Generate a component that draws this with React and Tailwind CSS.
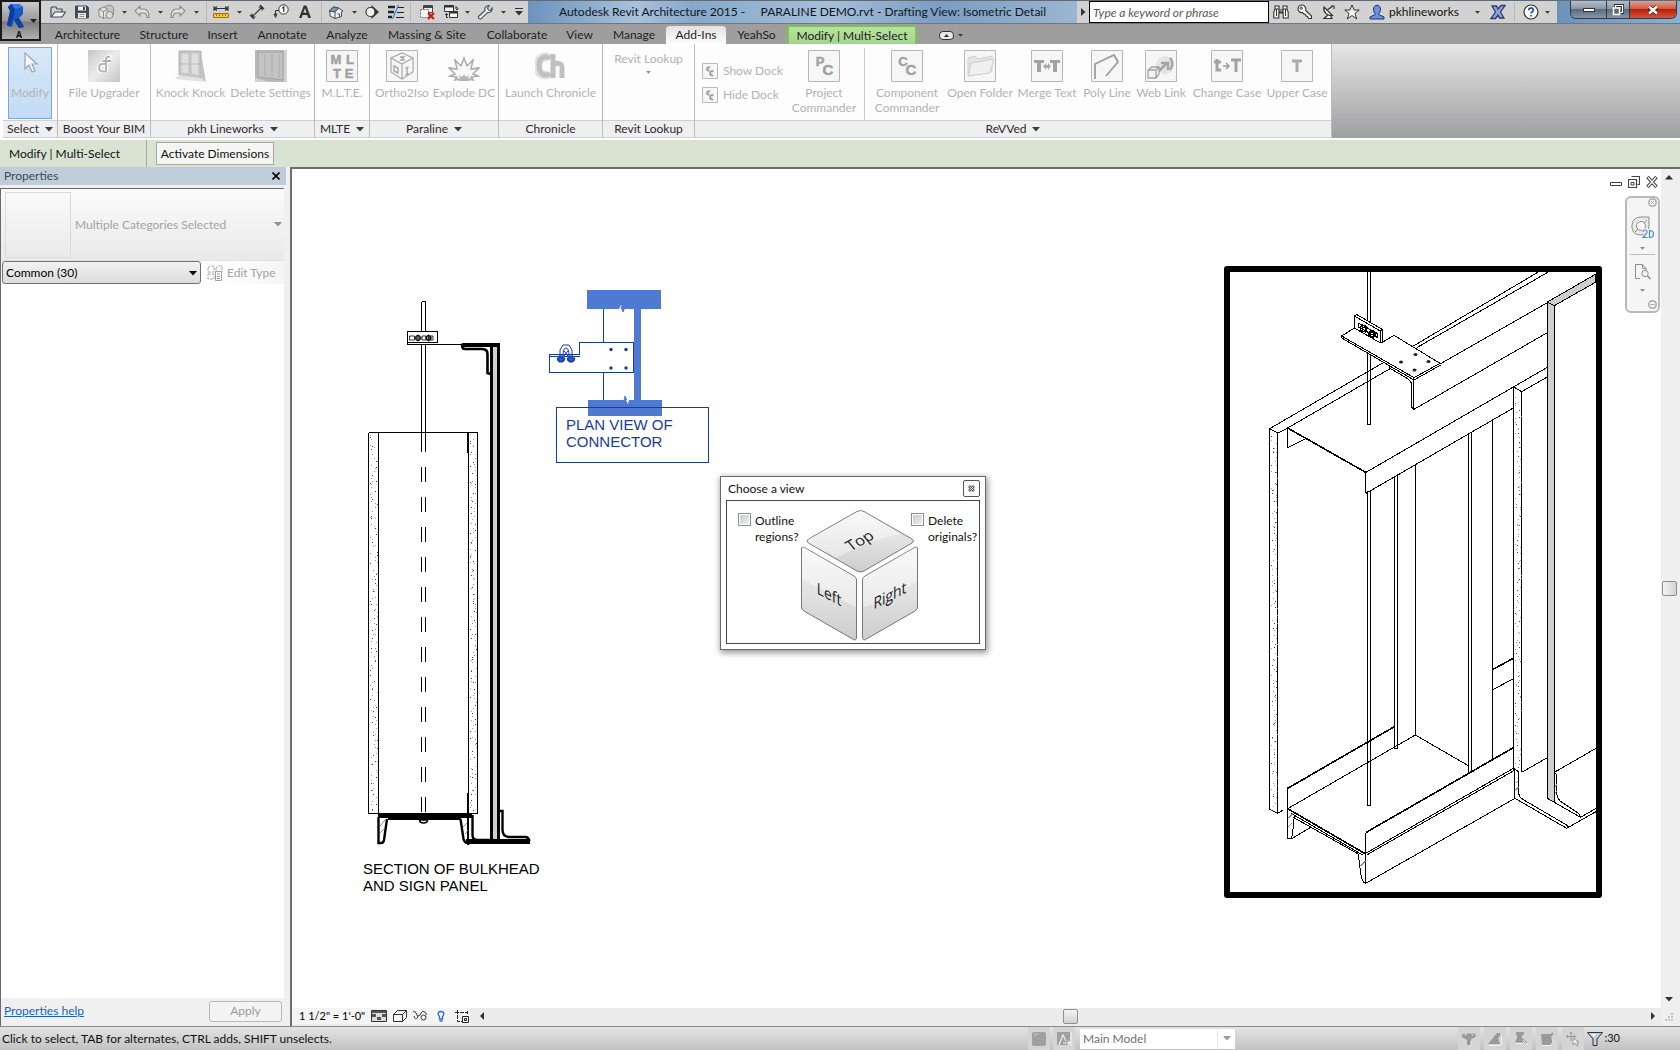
import React from "react";

const UI_FONT = "font-['Lato','Open_Sans',sans-serif]";

/* ---------- small helpers ---------- */

function Svg({ w = 16, h = 16, vb, className = "", children, ...rest }) {
  return (
    <svg width={w} height={h} viewBox={vb || `0 0 ${w} ${h}`} fill="none" aria-hidden="true" className={"block shrink-0 " + className} {...rest}>
      {children}
    </svg>
  );
}

function Caret({ className = "", fill = "#3c3c3c", w = 8 }) {
  return (
    <Svg w={w} h={5} vb="0 0 8 5" className={className}>
      <path d="M0 0h8L4 4.6z" fill={fill} />
    </Svg>
  );
}

function IconButton({ label, className = "", children }) {
  return (
    <button type="button" aria-label={label} className={"flex shrink-0 items-center justify-center " + className}>
      {children}
    </button>
  );
}

function Divider({ className = "" }) {
  return <span className={"h-5 w-px shrink-0 bg-[#b9b9b9] " + className} />;
}

/* ---------- quick access icons ---------- */

const ink = "#444b57";

const OpenIcon = () => (
  <Svg>
    <path d="M1 13V4l1-1h4l1 2h5v3" stroke={ink} strokeWidth="1.2" />
    <path d="M1.2 13 5 8h10.5L12 13z" fill="#f4f4f4" stroke={ink} strokeWidth="1.2" />
  </Svg>
);
const SaveIcon = () => (
  <Svg>
    <path d="M1.5 2h11.500l1.500 1.500V14h-13z" fill={ink} stroke={ink} />
    <path d="M4 2.500h8v4H4z" fill="#f1f1f1" />
    <path d="M4 9h8v5H4z" fill="#f1f1f1" />
    <path d="M5.500 10.500h5M5.500 12.500h5" stroke="#8f8f8f" />
    <path d="M9 3h2v3H9z" fill={ink} />
  </Svg>
);
const SyncIcon = () => (
  <Svg>
    <path d="M7 2.500 12 1l3.500 2.500v7L12 13l-5-2z" fill="#c7c7c7" stroke="#8a8a8a" />
    <path d="M1 5l5-2 4 2.500v7L5.500 14.500 1 12z" fill="#e3e3e3" stroke="#8a8a8a" />
    <path d="M1 5l4.500 2.500L10 5.500M5.500 7.500v7" stroke="#8a8a8a" />
    <circle cx="11.500" cy="11" r="3.500" fill="#dcdcdc" stroke="#8a8a8a" />
  </Svg>
);
const UndoIcon = ({ flip }) => (
  <Svg>
    <path
      transform={flip ? "translate(16 0) scale(-1 1)" : undefined}
      d="M1 7l5-5v3h3.500C13 5 15 7.500 15 13.500h-2C12.800 10.500 12 9 9.500 9H6v3z"
      fill="#e2e2e2"
      stroke="#8a8a8a"
      strokeWidth="1.100"
    />
  </Svg>
);
const MeasureIcon = () => (
  <Svg>
    <path d="M1 4.500h14M1 2v5M15 2v5M4 2.500 1.500 4.500 4 6.500M12 2.500l2.500 2-2.500 2" stroke="#333" strokeWidth="1.100" />
    <path d="M.5 9.500h15v4H.5z" fill="#ffc52e" stroke="#a8700a" />
    <path d="M3.500 10v2M6.500 10v2M9.500 10v2M12.500 10v2" stroke="#a8700a" />
  </Svg>
);
const DimIcon = () => (
  <Svg>
    <path d="M3 13 13 3M9.500 3H13v3.500M3 9.500V13h3.500M11 1l4 4M1 11l4 4" stroke="#333" strokeWidth="1.200" />
  </Svg>
);
const TagIcon = () => (
  <Svg>
    <circle cx="10.500" cy="5.500" r="4.700" fill="#f7f7f7" stroke="#333" />
    <path d="M9.200 4.200 10.800 3v5" stroke="#333" strokeWidth="1.200" />
    <path d="M6 6.500H2.500v5M1 10l1.500 3.500L4 10z" stroke="#333" />
  </Svg>
);
const TextIcon = () => (
  <Svg>
    <path d="M2 14 6.800 1.500h2.600L14 14h-2.800l-1-3H5.600l-1 3z M6.300 8.800h3.300L8 4.200z" fill="#333" fillRule="evenodd" />
  </Svg>
);
const HouseIcon = () => (
  <Svg>
    <path d="M1 7l4.500-4 5 1 4.500 3-1.500.8v4.700L7 14.500 2 12V7.500z" fill="#eef1f5" stroke={ink} />
    <path d="M1 7 5.500 3l5 1-3.500 4z" fill="#8593a6" stroke={ink} />
    <path d="M7 8v6.500M9.500 10h2v3" stroke={ink} />
  </Svg>
);
const SectionIcon = () => (
  <Svg>
    <path d="M7.500 1 15 8l-7.500 7z" fill="#333" />
    <circle cx="6.500" cy="8" r="4.500" fill="#f2f2f2" stroke="#333" strokeWidth="1.200" />
  </Svg>
);
const ThinIcon = () => (
  <Svg>
    <path d="M0 3h7M0 8h6M0 13h4" stroke="#222" strokeWidth="2.600" />
    <path d="M9 3.500h7M9 8.500h7M8 13.500h8" stroke="#222" />
    <path d="M10.500 1 4.500 15" stroke="#4a8ad0" strokeWidth="1.400" />
  </Svg>
);
const CloseHiddenIcon = () => (
  <Svg>
    <path d="M4.500 1.500h9v7h-9z" fill="#eee" stroke="#444" />
    <path d="M4.500 3h9" stroke="#444" strokeWidth="2" />
    <path d="M1.500 5.500h8v8h-8z" fill="#f5f5f5" stroke="#777" strokeDasharray="2 1" />
    <path d="m9 9 6 6M15 9l-6 6" stroke="#d01010" strokeWidth="2" />
  </Svg>
);
const SwitchIcon = () => (
  <Svg>
    <path d="M1.500 1.500h9v6h-9z" fill="#f5f5f5" stroke="#333" />
    <path d="M1.500 2.500h9" stroke="#333" strokeWidth="2" />
    <path d="M6.500 7.500h8v6h-8z" fill="#f5f5f5" stroke="#333" />
    <path d="M6.500 8.500h8" stroke="#333" strokeWidth="2" />
    <path d="M12 3h2v3M3.500 9.500v4H5M12.500 4.500 14 6l1.500-1.500M2 11l1.500-1.500L5 11" stroke="#333" />
  </Svg>
);
const WrenchIcon = () => (
  <Svg>
    <path d="M1.500 12.500 8 6.500C7.200 4 9 1.500 12 1.500L10.500 4l1 2 2.300.2L15 4c.7 2.500-1.500 5-4.500 4.500L4 14.800c-1.500.7-3.200-1-2.500-2.300z" fill="#f1f1f1" stroke={ink} strokeWidth="1.100" />
  </Svg>
);

/* [icon, label, spacing] ; "caret" and "bar" are separators between tools */
const quickTools = [
  [OpenIcon, "Open", "ml-[9px]"],
  [SaveIcon, "Save", "ml-2"],
  [SyncIcon, "Synchronize", "ml-2"],
  ["caret", "Synchronize options", "ml-1.5"],
  [UndoIcon, "Undo", "ml-1.5"],
  ["caret", "Undo list", "ml-1.5"],
  [() => <UndoIcon flip />, "Redo", "ml-1.5"],
  ["caret", "Redo list", "ml-1.5"],
  ["bar", "", "ml-1.5"],
  [MeasureIcon, "Measure", "ml-1.5"],
  ["caret", "Measure options", "ml-1.5"],
  [DimIcon, "Aligned Dimension", "ml-1.5"],
  [TagIcon, "Tag by Category", "ml-2"],
  [TextIcon, "Text", "ml-2"],
  ["bar", "", "ml-2"],
  [HouseIcon, "Default 3D View", "ml-1.5"],
  ["caret", "3D View options", "ml-1.5"],
  [SectionIcon, "Section", "ml-1.5"],
  [ThinIcon, "Thin Lines", "ml-2"],
  ["bar", "", "ml-1.5"],
  [CloseHiddenIcon, "Close Hidden Windows", "ml-2"],
  [SwitchIcon, "Switch Windows", "ml-2"],
  ["caret", "Switch Windows list", "ml-1"],
  [WrenchIcon, "Manage Tools", "ml-1.5"],
  ["caret", "Manage Tools options", "ml-1.5"],
];

function QuickAccess() {
  return (
    <div className="flex w-[487px] shrink-0 items-center bg-[#d2d2d2]">
      {quickTools.map(([Icon, label, gap], i) => {
        if (Icon === "bar") return <Divider key={i} className={gap} />;
        if (Icon === "caret")
          return (
            <IconButton key={i} label={label} className={"w-2 h-4 " + gap}>
              <Caret w={5} />
            </IconButton>
          );
        return (
          <IconButton key={i} label={label} className={gap}>
            <Icon />
          </IconButton>
        );
      })}
      <IconButton label="Customize Quick Access Toolbar" className="ml-2">
        <Svg w={8} h={8}>
          <path d="M0 .5h8" stroke="#333" />
          <path d="M0 3h8L4 7.500z" fill="#333" />
        </Svg>
      </IconButton>
    </div>
  );
}

/* ---------- title bar ---------- */

function TitleBar() {
  return (
    <header className="flex h-6 border-t border-[#5f6a74] border-b border-b-[#6f7880] bg-[#7f9fbf] pl-[41px]">
      <QuickAccess />
      <h1 className="flex min-w-0 flex-1 items-center justify-center overflow-hidden bg-[linear-gradient(90deg,#6c93bd,#a9c2da_20%,#86a8cb_30%,#a5bfd8_55%,#7a9dc2_75%,#9bb6d0)] text-[12px] whitespace-pre text-[#10151c]">
        {"Autodesk Revit Architecture 2015 -     PARALINE DEMO.rvt - Drafting View: Isometric Detail"}
      </h1>
      <div className="flex w-[480px] shrink-0 items-center bg-[#d2d2d2]">
        <IconButton label="Collapse search" className="w-3">
          <Svg w={5} h={8}>
            <path d="M0 0v8l4.500-4z" fill="#333" />
          </Svg>
        </IconButton>
        <input
          aria-label="Search help"
          placeholder="Type a keyword or phrase"
          className="h-[22px] w-[180px] border border-black bg-white px-[3px] text-[12px] italic placeholder:text-[#555]"
        />
        <IconButton label="Search" className="ml-1">
          <Svg>
            <path d="M2 5V2h4v3M10 5V2h4v3M2 5 .8 8v6h5V9h4.400v5h5V8L14 5h-4v3H6V5z" fill="#f6f6f6" stroke="#333" strokeWidth="1.100" />
            <path d="M3.500 5v7M12.500 5v7M6 6h4" stroke="#333" />
          </Svg>
        </IconButton>
        <IconButton label="Subscription Center" className="ml-2">
          <Svg>
            <path d="M5 1C2.500 1 1 2.800 1 5s2 4 4.500 3.500L7 10l1.500.5.500 1.500 1.500.500L11.500 14.500h3V12L8.700 6.500C9.200 3.500 7.500 1 5 1z" fill="#f6f6f6" stroke="#333" strokeWidth="1.100" />
            <circle cx="4.200" cy="4.200" r="1.100" stroke="#333" />
          </Svg>
        </IconButton>
        <IconButton label="Communication Center" className="ml-2">
          <Svg>
            <path d="M3 3c-1 5 3 9 8.500 8.500zM6 6l6-4M10 2h3v3M7 11l-4 3.500h8L9.500 12" fill="#f6f6f6" stroke="#333" strokeWidth="1.200" />
          </Svg>
        </IconButton>
        <IconButton label="Favorites" className="ml-[7px]">
          <Svg>
            <path d="m8 1 2 5h5.300L11 9.300 12.600 15 8 11.500 3.400 15 5 9.300.7 6H6z" fill="#f6f6f6" stroke="#333" />
          </Svg>
        </IconButton>
        <button type="button" className="ml-[9px] flex w-[92px] items-center gap-1 text-[12px] text-[#111]">
          <Svg>
            <path d="M4.500 5c0-5 7-5 7 0 0 2.500-.8 3.700-1.700 4.700v1l5.200 2.200V15H1v-2.100l5.200-2.200v-1C5.300 8.700 4.500 7.500 4.500 5z" fill="#6d8fe0" stroke="#1c3478" />
          </Svg>
          pkhlineworks
        </button>
        <Caret w={5} className="ml-3.5" />
        <IconButton label="Exchange Apps" className="ml-2.5">
          <Svg>
            <path d="M2 2h4.500L8 5l3-3.500h4L10.500 8l3.500 6H9.500L8 11l-2.500 3.500H1L5.500 8z" fill="#8ea3d8" stroke="#2d3c72" strokeWidth="1.300" />
          </Svg>
        </IconButton>
        <Divider className="ml-2" />
        <IconButton label="Help" className="ml-2">
          <Svg>
            <circle cx="8" cy="8" r="7" fill="#fbfbfb" stroke="#333" strokeWidth="1.200" />
            <path d="M5.700 6.300c0-3 4.600-3 4.600-.2 0 1.700-2.200 1.700-2.200 3.400M8 11v1.600" stroke="#2454b8" strokeWidth="1.800" />
          </Svg>
        </IconButton>
        <Caret w={5} className="ml-1.5" />
      </div>
      <div className="flex w-[123px] shrink-0 items-start justify-end bg-[linear-gradient(90deg,#6d93b8,#8fb0cf)] pr-[3px]">
        <div className="flex h-[18px] overflow-hidden rounded-b-md border border-t-0 border-[#2c3a48]">
          <IconButton label="Minimize" className="w-[35px] bg-[linear-gradient(#b3bec9,#8998a8_45%,#5a6b7c_50%,#8796a5)]">
            <span className="h-1 w-3 border border-[#333] bg-white" />
          </IconButton>
          <IconButton label="Restore" className="w-6 border-x border-[#2c3a48] bg-[linear-gradient(#b3bec9,#8998a8_45%,#5a6b7c_50%,#8796a5)]">
            <Svg w={12} h={12}>
              <path d="M3.500 1.500h7v7h-7z" stroke="#333" strokeWidth="3" />
              <path d="M3.500 1.500h7v7h-7z" stroke="#fff" strokeWidth="1.200" />
              <path d="M1.500 4h6v6.500h-6z" fill="#667" stroke="#fff" strokeWidth="1.500" />
            </Svg>
          </IconButton>
          <IconButton label="Close" className="w-[46px] bg-[linear-gradient(#e0a090,#cf5a44_45%,#b81f0c_50%,#d8553a)]">
            <Svg w={12} h={10}>
              <path d="m2 1.500 8 7M10 1.500l-8 7" stroke="#4a1a14" strokeWidth="4" />
              <path d="m2 1.500 8 7M10 1.500l-8 7" stroke="#fff" strokeWidth="2.400" />
            </Svg>
          </IconButton>
        </div>
      </div>
    </header>
  );
}

function AppButton() {
  return (
    <button
      type="button"
      aria-label="Application menu"
      className="absolute top-0 left-0 z-10 flex h-[41px] w-[41px] items-start border-2 border-[#1a1a1a] bg-[linear-gradient(#c9c9c9,#9a9a9a_50%,#7c7c7c_55%,#b0b0b0)]"
    >
      <Svg w={37} h={37}>
        <path d="M9 2h8l4 3v7l-4 4 5 9-5 1-5-8-2 7-5-2 3-14-2-4z" fill="#1a56c4" />
        <path d="M9 2h8l4 3-8 2z" fill="#2f78e6" />
        <path d="M9 2l4 5-2 10-3 8-3-2 3-14-2-4z" fill="#0d3c9c" />
        <path d="m17 16 5 9-5 1-5-8z" fill="#0f3f9f" />
        <path d="M28 17h7l-3.500 4z" fill="#222" />
        <path d="M14 36l2.400-7h1.400l2.400 7h-1.500l-.5-1.600h-2.300l-.5 1.600z M16.300 33h1.500l-.7-2.300z" fill="#111" fillRule="evenodd" />
      </Svg>
    </button>
  );
}

/* ---------- tabs ---------- */

const tabs = ["Architecture", "Structure", "Insert", "Annotate", "Analyze", "Massing & Site", "Collaborate", "View", "Manage", "Add-Ins", "YeahSo", "Modify | Multi-Select"];
const tabWidth = {
  Architecture: "w-[85px]", Structure: "w-[68px]", Insert: "w-[49px]", Annotate: "w-[70px]", Analyze: "w-[60px]",
  "Massing & Site": "w-[100px]", Collaborate: "w-20", View: "w-[45px]", Manage: "w-[64px]", "Add-Ins": "w-[60px]",
  YeahSo: "w-[61px]", "Modify | Multi-Select": "w-[130px]",
};

function Tabs() {
  return (
    <nav role="tablist" aria-label="Ribbon tabs" className="flex h-5 items-end bg-[#9e9e9e] pl-[45px] text-[12px] text-[#1e1e1e]">
      {tabs.map((t) => {
        const look =
          t === "Add-Ins"
            ? "bg-[linear-gradient(#e2e2e2,#fdfdfd)] rounded-t-sm"
            : t.startsWith("Modify")
            ? "bg-[linear-gradient(#b9dfa0,#a3d68a)] border-x-2 border-t border-[#78c850]"
            : "";
        return (
          <button key={t} type="button" role="tab" aria-selected={t === "Add-Ins"} className={"flex h-[18px] shrink-0 items-center justify-center whitespace-nowrap " + tabWidth[t] + " " + look}>
            {t}
          </button>
        );
      })}
      <IconButton label="Minimize ribbon" className="ml-[22px] h-[18px] gap-1">
        <span className="flex h-[9px] w-[15px] items-center justify-center rounded-sm border border-[#333] bg-[#e8e8e8]">
          <Svg w={5} h={3}>
            <path d="M0 3h5L2.500 0z" fill="#333" />
          </Svg>
        </span>
        <Caret w={5} />
      </IconButton>
    </nav>
  );
}

/* ---------- ribbon ---------- */

const g = "#a9a9a9";
const Boxed = ({ children }) => (
  <Svg w={32} h={32}>
    <path d="M.5.500h31v31H.5z" fill="#f6f6f6" stroke="#b5b5b5" />
    {children}
  </Svg>
);
const Glyphs = ({ items }) => (
  <Boxed>
    <g fill="#a2a2a2" stroke="#a2a2a2" strokeWidth=".5" fontFamily="'Liberation Sans',sans-serif" fontWeight="700">
      {items.map(([t, x, y, s]) => (
        <text key={t + x + y} x={x} y={y} fontSize={s} textAnchor="middle">{t}</text>
      ))}
    </g>
  </Boxed>
);

const UpgraderIcon = () => (
  <Svg w={32} h={32}>
    <defs>
      <linearGradient id="upg" x1="0" y1="0" x2="1" y2="1">
        <stop offset="0" stopColor="#c6c6c6" />
        <stop offset=".5" stopColor="#ececec" />
        <stop offset="1" stopColor="#c4c4c4" />
      </linearGradient>
    </defs>
    <path d="M0 0h32v32H0z" fill="url(#upg)" />
    <path d="M18 22V9q0-3 4-2M17 14q-6-1-6 3.500t6 4M15 11h8M20 5l3 3" stroke="#fafafa" strokeWidth="4" />
    <path d="M18 22V9q0-3 4-2M17 14q-6-1-6 3.500t6 4M15 11h8" stroke="#b0b0b0" strokeWidth="1.800" />
  </Svg>
);
const KnockIcon = () => (
  <Svg w={32} h={32}>
    <path d="M4 1h22v27l-22-3z" fill="#c9c9c9" stroke="#b2b2b2" />
    <path d="M6 3h8v21l-8-1zM16 3h8v23l-8-2z" fill="#dedede" stroke="#c0c0c0" />
    <path d="M4 14h22" stroke="#bababa" />
    <path d="M0 29 4 25l22 3 5 4z" fill="#e1e1e1" />
    <path d="M26 3v25l5 4z" fill="#c4c4c4" />
  </Svg>
);
const DeleteIcon = () => (
  <Svg w={32} h={32}>
    <path d="M0 0h32v32H0z" fill="#b9b9b9" />
    <path d="M3 2h25v28L3 27z" fill="#c3c3c3" stroke="#a3a3a3" />
    <path d="M10 4v22M17 4v23M24 4v24" stroke="#adadad" />
    <path d="M0 32v-4l14 4zM29 0h3v32h-3z" fill="#d2d2d2" />
  </Svg>
);
const MlteIcon = () => <Glyphs items={[["M", 10, 14, 13], ["L", 24, 14, 13], ["T", 11, 28, 13], ["E", 23, 28, 13]]} />;
const OrthoIcon = () => (
  <Boxed>
    <path d="m16 3 11 5v14l-11 7-11-7V8zM5 8l11 6 11-6M16 14v15" stroke={g} strokeWidth="1.200" />
    <path d="M14 7h4l-3 3h4M8 16l4 2v5l-4-2zM21 18v6M19.500 18.500l3-1.500M19.500 25l3-1.500" stroke={g} strokeWidth="1.400" />
  </Boxed>
);
const ExplodeIcon = () => (
  <Svg w={32} h={32}>
    <path d="m16 8 3 8 6-6-2 9 8-1-6 6 5 2-7 1 2 3-6-1-3 1-3-1-6 1 2-3-7-1 5-2-6-6 8 1-2-9 6 6z" fill="#f8f8f8" stroke={g} strokeWidth="1.500" />
    <path d="m16 24 1.500 3 4-2-2 3 5 1-4 2h-9l-4-2 5-1-2-3 4 2z" fill="#b5b5b5" />
  </Svg>
);
const ChronicleIcon = () => (
  <Svg w={32} h={32}>
    <path d="M15 9c-2-3-12-4-12 7s10 10 12 7" stroke="#e2e2e2" strokeWidth="9" />
    <path d="M15 9c-2-3-11-4-11 7s9 10 11 7" stroke="#c0c0c0" strokeWidth="5" />
    <path d="M18 4v24M18 17c1-5 9-5 9 0v11" stroke="#c0c0c0" strokeWidth="5" />
  </Svg>
);
const FolderIcon = () => (
  <Boxed>
    <path d="M4 25V8l7-2 3 3 14-3v15z" fill="#e3e3e3" stroke="#d0d0d0" />
    <path d="m4 26 3-13 23-4-4 14z" fill="#efefef" stroke="#cdcdcd" />
  </Boxed>
);
const MergeIcon = () => (
  <Boxed>
    <path d="M3 10h10v3h-3v9H6v-9H3zM19 10h10v3h-3v9h-4v-9h-3z" fill="#a2a2a2" />
    <path d="m12 16 3-3v2h2v-2l3 3-3 4v-2h-2v2z" fill="#a9a9a9" />
  </Boxed>
);
const PolyIcon = () => (
  <Boxed>
    <path d="M4 29V14L23 5l4 7-12 14" stroke="#9d9d9d" strokeWidth="1.800" />
  </Boxed>
);
const WebIcon = () => (
  <Boxed>
    <circle cx="20" cy="15" r="9" fill="#e4e4e4" />
    <path d="M14 21 21 14M16 13h7v7M25 8c3 3 3 8 0 12" stroke="#a5a5a5" strokeWidth="2.500" />
    <path d="m3 20 4-3h7v7l-3 4H3zM3 20h8v8M11 20l3-3" fill="#f3f3f3" stroke="#a2a2a2" strokeWidth="1.300" />
  </Boxed>
);
const ChangeIcon = () => (
  <Boxed>
    <path d="M6 9v11h4M3 12h7M20 10h10M25 10v12" stroke="#a2a2a2" strokeWidth="3" />
    <path d="M12 16h6M15 13l3 3-3 3" stroke="#999" strokeWidth="1.400" />
  </Boxed>
);
const UpperIcon = () => (
  <Boxed>
    <path d="M11 11h10M16 11v11" stroke="#a9a9a9" strokeWidth="3" />
  </Boxed>
);
const ProjectIcon = () => <Glyphs items={[["P", 12, 16, 13], ["C", 20, 25, 15]]} />;
const ComponentIcon = () => <Glyphs items={[["C", 12, 16, 13], ["C", 20, 25, 15]]} />;
const DockIcon = () => (
  <Svg vb="0 0 32 32">
    <path d="M1 1h30v30H1z" fill="#f6f6f6" stroke="#bbb" strokeWidth="2" />
    <path d="M16 9c-6-3-9 7-1 6M23 17c-8-4-10 9-1 8" stroke="#a0a0a0" strokeWidth="4" />
  </Svg>
);

function Tool({ icon: Icon, lines, width }) {
  return (
    <button type="button" disabled className={"flex shrink-0 flex-col items-center gap-[3px] pt-1.5 " + width}>
      <Icon />
      <span className="flex flex-col text-center text-[12px] leading-[15px] whitespace-nowrap">
        {lines.map((l) => (
          <span key={l}>{l}</span>
        ))}
      </span>
    </button>
  );
}

function Panel({ title, width, caret, children }) {
  return (
    <section aria-label={title} className={"flex shrink-0 flex-col border-r border-[#bdbdbd] " + width}>
      <div className="flex min-h-0 flex-1 justify-center overflow-hidden text-[#b2b2b2]">{children}</div>
      <div className="flex h-[18px] items-center justify-center gap-1.5 border-y border-[#cfcfd2] bg-[#efeff1] text-[12px] whitespace-nowrap text-[#2a2a2a]">
        {title}
        {caret && <Caret />}
      </div>
    </section>
  );
}

function Ribbon() {
  return (
    <div className="flex h-[96px] border-b-2 border-white bg-[linear-gradient(#e6e6e6,#9f9fa1)]">
      <div className="flex h-[94px] bg-[#fdfdfd] pl-[3px]">
        <Panel title="Select" width="w-[55px]" caret>
          <button type="button" disabled className="mt-[3px] mb-px flex w-[44px] flex-col items-center gap-[3px] border border-[#7ba7d6] bg-[linear-gradient(#d8e8f8,#c2dcf4)] text-[12px] leading-[15px]">
            <Svg w={32} h={34}>
              <path d="M11 5v16l4-4 3 7 3-1-3-7h5z" fill="#f4f8fc" stroke="#98a4b2" strokeWidth="1.200" />
            </Svg>
            <span>Modify</span>
          </button>
        </Panel>
        <Panel title="Boost Your BIM" width="w-[93px]">
          <Tool icon={UpgraderIcon} lines={["File Upgrader"]} width="w-[76px]" />
        </Panel>
        <Panel title="pkh Lineworks" width="w-[164px]" caret>
          <Tool icon={KnockIcon} lines={["Knock Knock"]} width="w-[76px]" />
          <Tool icon={DeleteIcon} lines={["Delete Settings"]} width="w-[84px]" />
        </Panel>
        <Panel title="MLTE" width="w-[55px]" caret>
          <Tool icon={MlteIcon} lines={["M.L.T.E."]} width="w-[50px]" />
        </Panel>
        <Panel title="Paraline" width="w-[129px]" caret>
          <Tool icon={OrthoIcon} lines={["Ortho2Iso"]} width="w-[60px]" />
          <Tool icon={ExplodeIcon} lines={["Explode DC"]} width="w-[64px]" />
        </Panel>
        <Panel title="Chronicle" width="w-[104px]">
          <Tool icon={ChronicleIcon} lines={["Launch Chronicle"]} width="w-[100px]" />
        </Panel>
        <Panel title="Revit Lookup" width="w-[92px]">
          <button type="button" disabled className="flex flex-col items-center gap-1 pt-[7px] text-[12px] leading-[15px] whitespace-nowrap">
            Revit Lookup
            <Caret w={5} fill="#909090" />
          </button>
        </Panel>
        <Panel title="ReVVed" width="w-[637px]" caret>
          <div className="flex w-full">
            <div className="flex w-[89px] shrink-0 flex-col gap-2 pt-[19px] pl-[7px] text-[12px]">
              <button type="button" disabled className="flex h-4 items-center gap-[5px] whitespace-nowrap"><DockIcon />Show Dock</button>
              <button type="button" disabled className="flex h-4 items-center gap-[5px] whitespace-nowrap"><DockIcon />Hide Dock</button>
            </div>
            <Tool icon={ProjectIcon} lines={["Project", "Commander"]} width="w-20" />
            <span className="mt-1 w-px shrink-0 bg-[#c8c8c8]" />
            <Tool icon={ComponentIcon} lines={["Component", "Commander"]} width="w-[84px]" />
            <Tool icon={FolderIcon} lines={["Open Folder"]} width="w-[62px]" />
            <Tool icon={MergeIcon} lines={["Merge Text"]} width="w-[72px]" />
            <Tool icon={PolyIcon} lines={["Poly Line"]} width="w-[48px]" />
            <Tool icon={WebIcon} lines={["Web Link"]} width="w-[60px]" />
            <Tool icon={ChangeIcon} lines={["Change Case"]} width="w-[72px]" />
            <Tool icon={UpperIcon} lines={["Upper Case"]} width="w-[68px]" />
          </div>
        </Panel>
      </div>
    </div>
  );
}

function OptionsBar() {
  return (
    <div className="flex h-[27px] items-center bg-[#d9e3d1] text-[12px] text-[#111]">
      <span className="w-[147px] shrink-0 self-stretch border-r border-[#a4ab9e] pl-[9px] leading-[27px]">Modify | Multi-Select</span>
      <button type="button" className="ml-[9px] h-[23px] w-[118px] border border-[#a5aaa0] bg-[#f5f6f3] whitespace-nowrap">Activate Dimensions</button>
    </div>
  );
}

/* ---------- properties palette ---------- */

function Properties() {
  return (
    <aside className="flex w-[290px] shrink-0 flex-col bg-[#f0f0f0] text-[12px]">
      <div className="flex h-[18px] w-[286px] items-center justify-between bg-[#bfcddb] pr-[6px] pl-1 text-[12px] text-[#3d4a5a]">
        <h2>Properties</h2>
        <IconButton label="Close properties">
          <Svg w={8} h={8}>
            <path d="m.5.500 7 7M7.500.500l-7 7" stroke="#000" strokeWidth="1.600" />
          </Svg>
        </IconButton>
      </div>
      <div className="mt-[3px] mr-[6px] flex flex-1 flex-col border-t border-l border-[#6a6a6a] bg-white">
        <button type="button" disabled className="flex h-[72px] items-center border-b border-[#e0e0e0] bg-[linear-gradient(#fbfbfb,#e9e9e9)] pr-0.5 pl-1 text-[#a3a3a3]">
          <span className="h-[66px] w-[66px] border border-[#dadada]" />
          <span className="ml-1 flex-1 text-left">Multiple Categories Selected</span>
          <Caret fill="#909090" />
        </button>
        <div className="flex items-center gap-1 bg-[linear-gradient(90deg,#fff_75%,#f5f5f5)]">
          <label className="relative ml-px flex">
            <select aria-label="Category filter" className="h-[23px] w-[199px] appearance-none rounded-[3px] border border-[#707070] bg-[linear-gradient(#f2f2f2,#dcdcdc)] pl-[3px] text-black">
              <option>Common (30)</option>
            </select>
            <Caret fill="#000" className="pointer-events-none absolute top-[10px] right-1" />
          </label>
          <button type="button" disabled className="ml-[2px] flex items-center gap-1 whitespace-nowrap text-[#a3a3a3]">
            <Svg>
              <path d="M1 3l2-2h4v6H1zM9 3l2-2h4v6H9zM1 9h6v5H1z" stroke="#a8a8a8" strokeDasharray="3 1" />
              <path d="M8.500 6.500h6v9h-6zM10 9h3M10 11.500h3M10 13.500h3" fill="#fafafa" stroke="#a0a0a0" />
            </Svg>
            Edit Type
          </button>
        </div>
      </div>
      <div className="mr-[6px] flex h-[28px] items-center justify-between border-l border-[#6a6a6a] pr-0.5 pb-0.5 pl-[3px]">
        <a href="#help" className="text-[#1464c8] underline">Properties help</a>
        <button type="button" disabled className="h-[21px] w-[73px] rounded-[3px] border border-[#b8b8b8] bg-[#f4f4f4] text-[#9a9a9a]">Apply</button>
      </div>
    </aside>
  );
}

/* ---------- drawings ---------- */

/* repeatable scatter used for the plaster hatch */
function speckle(x, y, w, h, step, seed) {
  let s = seed;
  let d = "";
  const next = () => {
    s = (s * 16807) % 2147483647;
    return s / 2147483647;
  };
  for (let yy = y; yy < y + h; yy += step) {
    d += `M${Math.round(x + next() * w)} ${Math.round(yy + next() * step)}h1`;
  }
  return d;
}

function SectionView() {
  return (
    <svg className="absolute top-[126px] left-[68px]" width="190" height="605" viewBox="360 295 190 605" fill="none" stroke="#000" role="img" aria-label="Section of bulkhead and sign panel">
      <g shapeRendering="crispEdges">
        <path d="M421.500 302v29M425.500 302v29M421.500 301.500h4M407.500 331.500h30v11h-30zM407.500 344.500h54M407.500 342.500v2" />
        <path d="M421.500 345v107M425.500 345v107" />
        <path d="M421.500 467v346M425.500 467v346" strokeDasharray="15 15" />
        <path d="M368.500 432.500h109v381M368.500 432.500v381h10v-381M468.500 432v381M468.500 813.500h9" />
        <path d="M468 433v20M468 793v52" strokeWidth="2" />
        <path d={speckle(370, 434, 7, 376, 4, 77)} stroke="#999" />
        <path d={speckle(370, 434, 7, 376, 7, 19)} stroke="#444" />
        <path d={speckle(470, 434, 6, 376, 4, 31)} stroke="#999" />
        <path d={speckle(470, 434, 6, 376, 7, 53)} stroke="#444" />
        <path d="M490 343h10v500h-10z" fill="#000" stroke="none" />
        <path d="M493 346h4v494h-4z" fill="#cfcfcf" stroke="none" />
        <path d="M378 813h94v5h-94zM388 818h73v2h-73z" fill="#000" stroke="none" />
        <path d="M466 839h64v5h-64z" fill="#000" stroke="none" />
      </g>
      <path d="M463 345h35" strokeWidth="4" strokeLinecap="round" />
      <path d="M462 345q0 4 3 4h17q5.500 0 5.500 5v19l3 1" strokeWidth="2.600" />
      <path d="M409.500 336h5v4h-5zM422 336h4v4h-4zM430 336h3v4h-3z" strokeWidth=".8" />
      <circle cx="418" cy="338" r="2.300" strokeWidth="1.200" />
      <circle cx="428.500" cy="338" r="2.300" strokeWidth="1.200" />
      <path d="M415 338h7M425 338h7M418 334.500v7M428.500 334.500v7" strokeWidth=".8" />
      <path d="M378.500 817v26h3q2 0 2.500-3l3-21M460.500 819l3 20q1 4 4 4h3" strokeWidth="2.400" />
      <path d="m380 826 5-6M380 833l4-4M463 827l4-4M465 834l3-4" stroke="#777" strokeWidth=".8" />
      <path d="M472.500 815v20q0 5 5 5h16" strokeWidth="2.400" />
      <path d="M500 811h2.500v19q0 6 6 7h17q3 0 4 4" strokeWidth="2.400" />
      <path d="M419.500 820h8q0 3-4 3t-4-3z" fill="#fff" strokeWidth="1.500" />
      <g fill="#000" stroke="none" fontFamily="'Liberation Sans',Arial,sans-serif" fontSize="15">
        <text x="363" y="874">SECTION OF BULKHEAD</text>
        <text x="363" y="891">AND SIGN PANEL</text>
      </g>
    </svg>
  );
}

function PlanView() {
  return (
    <svg className="absolute top-[116px] left-[248px]" width="180" height="185" viewBox="540 285 180 185" fill="none" stroke="#1a3b9a" role="img" aria-label="Plan view of connector">
      <g shapeRendering="crispEdges">
        <path d="M587 290h74v19h-74zM588 400h74v16h-74zM634 309h7v91h-7z" fill="#5079d2" stroke="none" />
        <path d="M603.500 309v33M603.500 373v27" />
        <path d="M549.500 354.500h30v-12h54v30h-84zM549.500 356.500h30" />
        <path d="M556.500 407.500h152v55h-152z" />
      </g>
      <path d="M619 309l2-4 1 4z" fill="#fff" stroke="none" />
      <path d="M621 307l2 5 2-5M624 401l1-5 2 5" fill="#5079d2" stroke="#5079d2" />
      <path d="M626 400l2 4 1-4z" fill="#fff" stroke="none" />
      <g fill="#1a3b9a" stroke="none">
        <circle cx="611" cy="349.500" r="1.700" />
        <circle cx="626" cy="349.500" r="1.700" />
        <circle cx="611" cy="368" r="1.700" />
        <circle cx="626" cy="368" r="1.700" />
      </g>
      <path d="M560 357v-7l3-5h6l3 5v7M563 356q0-8 3-8t3 8M564 351l4 5M568 351l-4 5" />
      <path d="M557 358h8l-1 3h-6zM567 358h8l-1 3h-6zM559 356h4v6h-4zM569 356h4v6h-4z" fill="#2f6ae0" />
      <g fill="#1a3b9a" stroke="none" fontFamily="'Liberation Sans',Arial,sans-serif" fontSize="15">
        <text x="566" y="430">PLAN VIEW OF</text>
        <text x="566" y="447">CONNECTOR</text>
      </g>
    </svg>
  );
}

function IsoView() {
  const fine = { vectorEffect: "non-scaling-stroke" };
  return (
    <svg className="absolute top-[95px] left-[930px]" width="382" height="638" viewBox="1222 264 382 638" fill="none" stroke="#000" role="img" aria-label="Isometric detail">
      <g transform="translate(1210 250) scale(.333333)" shapeRendering="crispEdges">
        <path d="M1012 156 1158 72v24l-125 71z" fill="#cfcfcf" style={fine} />
        <path d="M1012 156l21 11v1490l-21-12z" fill="#cfcfcf" style={fine} />
        <path style={fine} d="M472 66v152M482 66v154M472 308v216h10V312M472 722v946h10V720M610 288 985 66M622 292 1015 66M690 342 1012 158M612 478 1012 248M468 667 1012 352M935 425 1012 381M468 730 910 474" />
        <path style={fine} d="M910 410l25 15v1140M910 410v1150M847 510v1018M775 548v1020M784 545v1020M616 644v811M553 680v815h9V676M179 536v1142l24 12V549zM179 536 520 338M203 549l30-15M233 534 540 356M233 534v59l52-26M467 667v63" />
        <path style={fine} strokeWidth="1.600" d="M233 534 467 667" />
        <path style={fine} fill="#fff" d="M395 258l38-24 84 43 35-21 138 84-78 43z" />
        <path style={fine} d="M395 258v6l217 126 80-45M604 402v68l8 8V385M540 345v10l48 28q16 8 16 20" />
        <path style={fine} fill="#fff" d="M433 234v-36l8-4 77 45v36l-8 3zM433 198l78 45v32M511 243l7-4" />
        <path style={fine} d="M445 219l58 32v12l-58-32zM458 222v22M466 226v22M483 238v22M491 242v20M452 236l14-6M480 250l14-6" />
        <circle style={fine} cx="460" cy="236" r="9" strokeWidth="1.500" />
        <circle style={fine} cx="486" cy="252" r="9" strokeWidth="1.500" />
      </g>
      <g fill="#222" stroke="none">
        <ellipse cx="1415.500" cy="354.500" rx="2" ry="1.500" />
        <ellipse cx="1401" cy="362" rx="2" ry="1.500" />
        <ellipse cx="1428.500" cy="361.500" rx="2" ry="1.500" />
        <ellipse cx="1414.500" cy="370" rx="2" ry="1.500" />
      </g>
      <g transform="translate(1210 580) scale(.333333)" shapeRendering="crispEdges">
        <path style={fine} strokeWidth="1.600" d="M233 625 553 440M467 758 910 503M849 268l61-33M233 686l234 136" />
        <path style={fine} d="M203 700l17-10M233 625v151h12q5-30 8-68M233 686 616 465l159 92M243 700l217 126M250 712l195 110M245 776l55-33M467 758v152l448-255M467 820 910 565M470 825 915 570M445 822l7 58q5 30 15 30M849 329l61-33" />
        <path style={fine} d="M910 565h5v90l155 90 88-50M915 568l11 7v65q2 12 12 18l137 80-5 7M935 577l77-44M1033 577l125-72M1033 577l8 8v60q3 15 15 22l50 33 6 12M1012 655l100 57 46-27" />
        <path style={fine} stroke="#888" d="m235 715 14-14M235 740l12-12M452 858l14-14M1034 620l6-6M1034 640l6-6M917 610l8-8M917 630l8-8" />
      </g>
      <g shapeRendering="crispEdges">
        <path d={speckle(1271, 436, 6, 370, 4, 91)} stroke="#999" />
        <path d={speckle(1271, 436, 6, 370, 8, 23)} stroke="#444" />
        <path d={speckle(1515, 396, 6, 370, 4, 47)} stroke="#999" />
        <path d={speckle(1515, 396, 6, 370, 8, 67)} stroke="#444" />
      </g>
      <rect x="1227" y="269" width="372" height="626" strokeWidth="6" strokeLinejoin="round" />
    </svg>
  );
}

/* ---------- view chooser dialog ---------- */

function Face({ name, className, w, h, d, matrix, shine }) {
  return (
    <button type="button" aria-label={name} className={"absolute " + className}>
      <Svg w={w} h={h}>
        <defs>
          <linearGradient id={"face" + name} x1="0" y1="0" x2="0" y2="1">
            <stop offset="0" stopColor="#f6f6f6" />
            <stop offset="1" stopColor="#cdcdcd" />
          </linearGradient>
        </defs>
        <path d={d} fill={`url(#face${name})`} stroke="#777" strokeLinejoin="round" />
        <path d={shine} fill="#fff" fillOpacity=".4" />
        <g transform={matrix}>
          <text textAnchor="middle" y="5" fontSize="16" fill="#222" fontFamily="'Open Sans',sans-serif">{name}</text>
        </g>
      </Svg>
    </button>
  );
}

function ChooseView() {
  const box = "h-[13px] w-[13px] shrink-0 appearance-none border border-[#8a8f94] bg-[linear-gradient(135deg,#c4c8cc,#f2f2f2)] outline outline-1 -outline-offset-2 outline-white";
  return (
    <section role="dialog" aria-label="Choose a view" className="absolute top-[307px] left-[428px] flex h-[174px] w-[266px] flex-col border border-[#6a6a6a] bg-white px-[5px] pb-[5px] text-[12px] leading-4 text-[#111] shadow-[1px_2px_6px_1px_rgba(0,0,0,0.4)]">
      <div className="flex h-[23px] items-center justify-between pl-0.5">
        <h2>Choose a view</h2>
        <IconButton label="Close dialog" className="h-[17px] w-[17px] rounded-[2px] border border-[#555] bg-[#fafafa]">
          <Svg w={7} h={7}>
            <path d="m1 1 5 5M6 1 1 6" stroke="#555" strokeWidth="2.600" />
            <path d="m1.500 1.500 4 4M5.500 1.500l-4 4" stroke="#fff" strokeWidth=".9" />
          </Svg>
        </IconButton>
      </div>
      <div className="relative flex flex-1 justify-between border border-[#444] pt-3 pl-[11px]">
        <label className="flex h-8 gap-1">
          <input type="checkbox" className={box} />
          <span>Outline<br />regions?</span>
        </label>
        <label className="flex h-8 w-[68px] gap-1">
          <input type="checkbox" className={box} />
          <span>Delete<br />originals?</span>
        </label>
        <Face name="Left" className="top-[45px] left-[74px]" w={56} h={95}
          d="M.5 3q0-3 3-1.500L53 30q2.500 1.500 2.500 4v57q0 4-3 2.500L3 65Q.5 63.500.5 61z"
          shine="M1 3q0-2 3-1l48 28q3 1.500 3 4v27L1 33z"
          matrix="matrix(.87 .45 0 1 28 49)" />
        <Face name="Right" className="top-[45px] left-[135px]" w={56} h={95}
          d="M55.500 3q0-3-3-1.500L3 30Q.5 31.500.5 34v57q0 4 3 2.500L53 65q2.500-1.500 2.500-4z"
          shine="M55 3q0-2-3-1L4 30q-3 1.500-3 4v27q28-5 54-27z"
          matrix="matrix(.87 -.45 0 1 28 50)" />
        <Face name="Top" className="top-[9px] left-[79px]" w={109} h={63}
          d="M51 1.500q3.500-2 7 0L106 29q3 2 0 4L58 61q-3.500 2-7 0L2.500 33q-3-2 0-4z"
          shine="M51 2q3.500-1.500 7 0l37 22Q68 28 30 48L3 33q-2-2 0-4z"
          matrix="matrix(.87 -.48 .6 .75 54 31)" />
      </div>
    </section>
  );
}

/* ---------- canvas ---------- */

function NavBar() {
  return (
    <div className="absolute top-[27px] right-px flex h-[117px] w-[35px] flex-col items-center rounded-md border-2 border-[#b9b9b9] bg-[#f5f5f5]">
      <IconButton label="Close navigation bar" className="mr-px self-end">
        <Svg w={9} h={9}><circle cx="4.500" cy="4.500" r="3.700" stroke="#aaa" strokeWidth="1.500" /><path d="m3 3 3 3M6 3 3 6" stroke="#aaa" /></Svg>
      </IconButton>
      <IconButton label="2D steering wheel" className="mt-2">
        <Svg w={26} h={26}>
          <path d="M2 13V10Q3 2 11 2h8v9q0 8-8 9-8 0-9-7z" fill="#e9e9e9" stroke="#8d8d8d" />
          <circle cx="11" cy="11" r="4.500" fill="#f8f8f8" stroke="#8d8d8d" />
          <path d="M5 17l3-3M14 8l3-3" stroke="#8d8d8d" />
          <path d="M13 17q0-2 2-2t2 2q0 1.500-4 5.500h4.500M19.500 15.500v7q4 0 4-3.500t-4-3.500z" stroke="#f5f5f5" strokeWidth="3" />
          <path d="M13 17q0-2 2-2t2 2q0 1.500-4 5.500h4.500M19.500 15.500v7q4 0 4-3.500t-4-3.500z" stroke="#4a88c0" strokeWidth="1.200" />
        </Svg>
      </IconButton>
      <Caret w={5} fill="#888" className="mt-[5px]" />
      <span className="mt-[3px] h-px w-[25px] bg-[#bcbcbc]" />
      <IconButton label="Zoom region" className="mt-2">
        <Svg w={18} h={18}>
          <path d="M6 15.500H1.500v-14h7l3.500 4V8M8.500 1.500v4H12" stroke="#8d8d8d" />
          <circle cx="11" cy="10.500" r="3.200" fill="#f1f1f1" stroke="#8d8d8d" />
          <path d="m13.500 13 3 3" stroke="#8d8d8d" strokeWidth="1.600" />
        </Svg>
      </IconButton>
      <Caret w={5} fill="#888" className="mt-[7px]" />
      <IconButton label="Navigation options" className="mt-auto mr-px mb-0.5 self-end">
        <Svg w={9} h={9}><circle cx="4.500" cy="4.500" r="3.700" stroke="#aaa" strokeWidth="1.500" /><path d="M2.500 4.500h4" stroke="#aaa" /></Svg>
      </IconButton>
    </div>
  );
}

function WindowControls() {
  return (
    <div className="absolute top-[7px] right-[3px] flex items-center gap-1.5">
      <IconButton label="Minimize view"><Svg w={12} h={12}><path d="M.5 6.500h11v3H.5z" fill="#fff" stroke="#444" /></Svg></IconButton>
      <IconButton label="Restore view"><Svg w={12} h={12}><path d="M3.500.500h8v8h-2M.5 3.500h8v8h-8z" stroke="#444" strokeWidth="1.200" /><path d="M3 6.500h3V9H3z" stroke="#444" /></Svg></IconButton>
      <IconButton label="Close view">
        <Svg w={12} h={12}><path d="m1.500 1 9 10M10.500 1l-9 10" stroke="#444" strokeWidth="3.400" /><path d="m2 1.500 8 9M10 1.500l-8 9" stroke="#fff" strokeWidth="1.200" /></Svg>
      </IconButton>
    </div>
  );
}

function ViewBar() {
  return (
    <div className="flex h-[18px] items-start bg-[#ececec] text-black">
      <div className="flex h-4 items-center bg-[#f4f4f4] pl-[7px] text-[11px]">
        <button type="button" className="w-[65px] text-left whitespace-nowrap">1 1/2" = 1'-0"</button>
        <IconButton label="Detail level" className="ml-[7px]">
          <Svg><path d="M.5 2.500h15v11H.5z" fill="#ddd" stroke="#333" /><path d="M1 3h14v2H1zM1 6h4v3H1zM11 6h4v3h-4zM6 9h4v3H6z" fill="#555" /></Svg>
        </IconButton>
        <IconButton label="Visual style" className="ml-[5px]">
          <Svg><path d="M1.500 6.500h9v7h-9zM1.500 6.500l4-4h9l-4 4M14.500 2.500v7l-4 4" stroke="#333" strokeLinejoin="round" /></Svg>
        </IconButton>
        <IconButton label="Temporary hide" className="ml-1">
          <Svg><path d="M1 4q2-2 3 1l2 4q-3 4-4-1M6 8q2 0 3-3 2-3 4-1t1 3" stroke="#333" /><circle cx="11.500" cy="9.500" r="2.500" stroke="#333" /></Svg>
        </IconButton>
        <IconButton label="Reveal hidden elements" className="ml-[5px]">
          <Svg><path d="M8 3.500c-4 0-3 3.500-1.500 5V11h3V8.500C11 7 12 3.500 8 3.500zM6.500 13h3" stroke="#1f6fd8" strokeWidth="1.300" /></Svg>
        </IconButton>
        <IconButton label="Crop constraints" className="ml-[5px]">
          <Svg><path d="M1 4.500h13M3.500 2v11.500H8M13.500 3v3" stroke="#222" strokeDasharray="4 1" /><path d="M8.500 8.500h6v6h-6zM10.500 10.500h2v2h-2z" stroke="#222" /></Svg>
        </IconButton>
      </div>
      <IconButton label="Scroll left" className="ml-1.5 h-4 w-3"><Svg w={4} h={8}><path d="M4 0v8L0 4z" fill="#333" /></Svg></IconButton>
      <div className="flex h-4 flex-1 items-center">
        <span className="ml-[49%] h-[15px] w-[15px] shrink-0 rounded-[2px] border border-[#8e8e8e] bg-[linear-gradient(#f4f4f4,#d2d2d2)]" />
        <IconButton label="Scroll right" className="mr-[6px] ml-auto"><Svg w={4} h={8}><path d="M0 0v8l4-4z" fill="#333" /></Svg></IconButton>
      </div>
    </div>
  );
}

function Workspace() {
  return (
    <div className="flex min-w-0 flex-1 border-t-2 border-l-2 border-[#6e6e6e]">
      <div className="flex min-w-0 flex-1 flex-col">
        <main className="relative min-h-0 flex-1 overflow-hidden bg-white">
          <SectionView />
          <PlanView />
          <IsoView />
          <WindowControls />
          <NavBar />
          <ChooseView />
        </main>
        <ViewBar />
      </div>
      <div className="flex w-[19px] shrink-0 flex-col items-center bg-[#efefef] pt-[6px] pr-[3px] pb-1">
        <IconButton label="Scroll up"><Svg w={8} h={5}><path d="M0 4.500h8L4 0z" fill="#333" /></Svg></IconButton>
        <div className="flex flex-1 flex-col items-center justify-center">
          <span className="h-[15px] w-[15px] rounded-[2px] border border-[#8e8e8e] bg-[linear-gradient(90deg,#f4f4f4,#d2d2d2)]" />
        </div>
        <IconButton label="Scroll down" className="mb-2.5"><Caret fill="#333" /></IconButton>
        <Svg w={10} h={10}><path d="M7 1h2v2H7zM4 4h2v2H4zM7 4h2v2H7zM1 7h2v2H1zM4 7h2v2H4zM7 7h2v2H7z" fill="#c4c4c4" /></Svg>
      </div>
    </div>
  );
}

/* ---------- status bar ---------- */

const chip = "h-6 w-[22px] bg-[#d4d4d4]";

function StatusBar() {
  return (
    <footer className="flex h-6 items-center border-t border-[#8a8a8a] bg-[linear-gradient(#e4e4e4,#c2c2c2)] text-[12px] text-[#111]">
      <p className="w-[1028px] shrink pl-0.5 whitespace-nowrap">Click to select, TAB for alternates, CTRL adds, SHIFT unselects.</p>
      <IconButton label="Worksets" className={chip}>
        <Svg><path d="M1 3q0-2 2-2h10q2 0 2 2v10q0 2-2 2H3q-2 0-2-2z" fill="#a0a0a0" /><path d="M3 5h2M3 3h4" stroke="#c4c4c4" /></Svg>
      </IconButton>
      <IconButton label="Design options" className={"ml-[3px] " + chip}>
        <Svg><path d="M1 1h13v13H1z" fill="#a0a0a0" /><path d="M3 14 7 4l3 6M7 12h7M12 10l2.500 2-2.500 2M15 1v14" stroke="#eee" strokeWidth="1.200" /></Svg>
      </IconButton>
      <label className="relative ml-[5px] flex">
        <select aria-label="Active design option" disabled className="h-[20px] w-[155px] appearance-none bg-white pl-[3px] text-[#707070] opacity-100">
          <option>Main Model</option>
        </select>
        <span className="pointer-events-none absolute top-0 right-0 flex h-full w-[18px] items-center justify-center border-l border-[#e6e6e6]"><Caret fill="#999" /></span>
      </label>
      <div className="ml-auto flex items-center gap-1">
        <IconButton label="Select links" className={chip}>
          <Svg><path d="M1 4q2-3 4 0 2-3 5-1 3-2 5 1-1 4-4 3l-1 2v5H6V9L3 7Q0 7 1 4z" fill="#9a9a9a" /><path d="M4 4h1M11 4h1M10 10v5" stroke="#eee" /></Svg>
        </IconButton>
        <IconButton label="Select underlay elements" className={chip}>
          <Svg><path d="M1 13 10 2h3v3l-2 2 2 6z" fill="#9a9a9a" /><path d="M2 14.500h12M14.500 5v9" stroke="#f2f2f2" /></Svg>
        </IconButton>
        <IconButton label="Select pinned elements" className={chip}>
          <Svg><path d="M3 1h8v3H9v3l5 4v2l-4-2-3 1-5-1 2-4V4H3z" fill="#9a9a9a" /><path d="m10 9 5 5M3 12.500h6" stroke="#f2f2f2" /></Svg>
        </IconButton>
        <IconButton label="Select elements by face" className={chip}>
          <Svg><path d="M2 3h9l3-2v3l-2 2 2 4-3 4H3z" fill="#9a9a9a" /><path d="M3 14.500h9M13 8l2 4" stroke="#f2f2f2" /></Svg>
        </IconButton>
        <IconButton label="Drag elements on selection" className={chip}>
          <Svg><path d="M6 1v9M1.500 5.500h9M4.500 2.500 6 1l1.500 1.500M3 4 1.500 5.500 3 7M9 4l1.500 1.500L9 7" stroke="#9a9a9a" /><path d="M8 7v7l2-2 2 3 1-1-1-3h2z" fill="#eee" stroke="#9a9a9a" /></Svg>
        </IconButton>
      </div>
      <button type="button" className="mr-[60px] ml-[3px] flex items-end gap-px text-[11px]">
        <Svg><path d="M.5 1.500h15L10 8v6.500H6V8z" fill="#c2cde0" stroke="#333" strokeLinejoin="round" /><path d="M4 3h5L7 6z" fill="#fff" /></Svg>
        :30
      </button>
    </footer>
  );
}

export default function App() {
  return (
    <div className={"relative flex h-screen min-h-[600px] flex-col overflow-hidden bg-[#f0f0f0] " + UI_FONT}>
      <AppButton />
      <TitleBar />
      <Tabs />
      <Ribbon />
      <OptionsBar />
      <div className="flex min-h-0 flex-1">
        <Properties />
        <Workspace />
      </div>
      <StatusBar />
    </div>
  );
}
